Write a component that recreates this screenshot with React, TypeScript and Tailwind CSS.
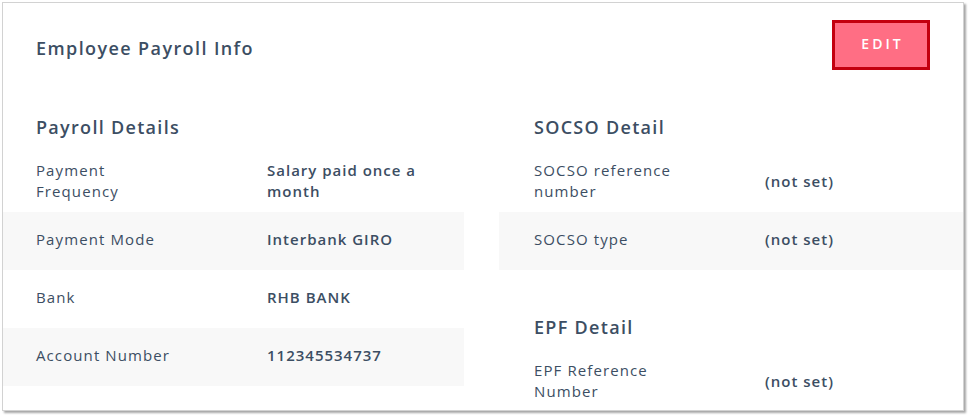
type Row = { label: string; value: string }

const payroll: Row[] = [
  { label: 'Payment Frequency', value: 'Salary paid once a month' },
  { label: 'Payment Mode', value: 'Interbank GIRO' },
  { label: 'Bank', value: 'RHB BANK' },
  { label: 'Account Number', value: '112345534737' },
]

const socso: Row[] = [
  { label: 'SOCSO reference number', value: '(not set)' },
  { label: 'SOCSO type', value: '(not set)' },
]

const epf: Row[] = [{ label: 'EPF Reference Number', value: '(not set)' }]

function Section({ title, rows, right }: { title: string; rows: Row[]; right?: boolean }) {
  const pad = right ? 'pl-[35px]' : 'pl-[33px]'
  return (
    <div>
      <h3 className={`${pad} text-[18px] leading-[24px] font-semibold text-[#3c4e63] mb-[15px] tracking-[1.3px]`}>
        {title}
      </h3>
      {rows.map((r, i) => (
        <div
          key={r.label}
          className={`grid grid-cols-[231px_1fr] items-center min-h-[58px] pt-[6px] pb-[10px] ${pad} ${
            i % 2 === 1 ? 'bg-[#f8f8f8]' : ''
          }`}
        >
          <div className="max-w-[152px] text-[15px] leading-[21px] text-[#3c4e63] tracking-[1.1px]">{r.label}</div>
          <div className="max-w-[185px] text-[15px] leading-[21px] font-semibold text-[#3c4e63] tracking-[1px]">
            {r.value}
          </div>
        </div>
      ))}
    </div>
  )
}

export default function App() {
  return (
    <div className="w-[970px] h-[418px] bg-white pt-[2px] pl-[2px]" style={{ fontFamily: '"Open Sans", sans-serif' }}>
      <div className="w-[962px] h-[409px] bg-white border border-[#d2d2d2] shadow-[2px_2px_2px_rgba(0,0,0,0.35)] overflow-hidden">
        <div className="flex items-start justify-between pl-[33px] pr-[33px] pt-[17px]">
          <h2 className="mt-[16px] text-[18px] leading-[24px] font-semibold text-[#3c4e63] tracking-[1.4px]">
            Employee Payroll Info
          </h2>
          <button className="w-[98px] h-[50px] bg-[#ff6e84] border-[3px] border-[#c3000f] text-white text-[14px] font-semibold tracking-[3px] pl-[3px] pb-[3px]">
            EDIT
          </button>
        </div>
        <div className="grid grid-cols-[461px_1fr] gap-[35px] mt-[45px]">
          <Section title="Payroll Details" rows={payroll} />
          <div>
            <Section title="SOCSO Detail" rows={socso} right />
            <div className="mt-[45px]">
              <Section title="EPF Detail" rows={epf} right />
            </div>
          </div>
        </div>
      </div>
    </div>
  )
}
